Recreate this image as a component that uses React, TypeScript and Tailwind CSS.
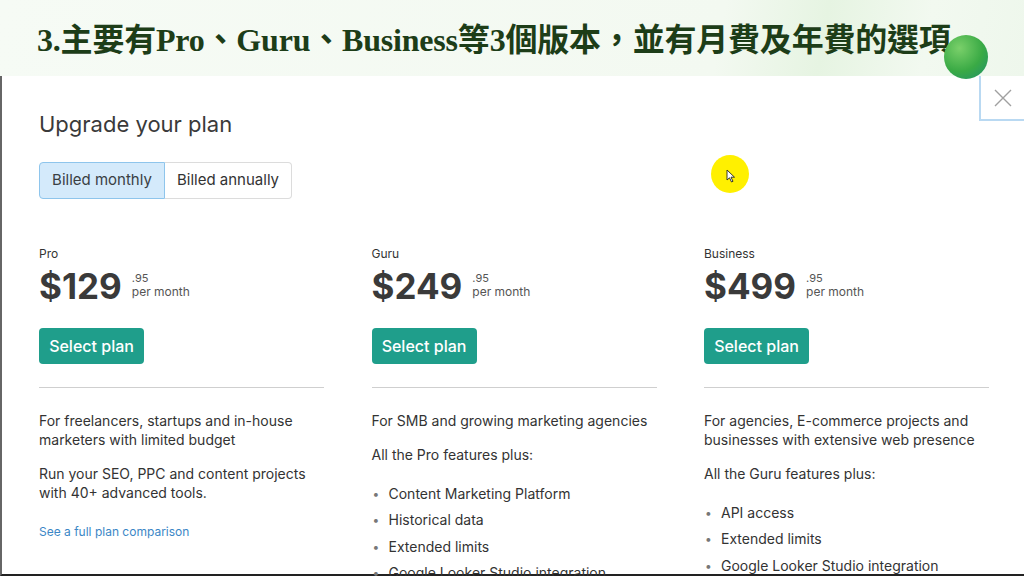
import React from "react";

function Bullet({ children }: { children: React.ReactNode }) {
  return (
    <li className="flex items-center h-[26.5px]">
      <span className="w-[17px] pl-[1px] text-[#777] text-[12px]">•</span>
      <span>{children}</span>
    </li>
  );
}

function PriceHead({ name, price }: { name: string; price: string }) {
  return (
    <>
      <div className="text-[12px] leading-[16px] text-[#333]">{name}</div>
      <div className="flex items-start mt-[5px]">
        <span className="text-[35px] leading-[38px] font-bold text-[#3a3a3a]">{price}</span>
        <div className="ml-[10px] mt-[5px] flex flex-col text-[#555]">
          <span className="text-[11px] leading-[12px]">.95</span>
          <span className="text-[12px] leading-[15px]">per month</span>
        </div>
      </div>
      <button className="mt-[23px] h-[36px] w-[105px] rounded-[4px] bg-[#1f9e8b] text-white text-[16px] font-medium">
        Select plan
      </button>
      <div className="mt-[23px] h-px bg-[#cfcfcf]" />
    </>
  );
}

export default function App() {
  return (
    <div className="relative w-[1024px] h-[576px] overflow-hidden bg-white font-['Inter','Noto_Sans',sans-serif]">
      <header className="h-[76px] flex items-center pl-[37px] bg-[linear-gradient(100deg,#f6fbf5_0%,#f3f9f1_70%,#e6f4e2_80%,#f2f9f0_90%,#eef7ec_100%)]">
        <h1 className="text-[32px] font-bold text-[#1d3d18] tracking-[-0.2px] font-['Liberation_Serif','Noto_Sans_CJK_TC',serif] mt-[4px]">
          3.主要有Pro、Guru、Business等3個版本，並有月費及年費的選項
        </h1>
      </header>

      <main className="relative h-[500px] border-l-2 border-b-2 border-l-[#666] border-b-[#222] pl-[37px] pt-[34px] text-[#333]">
        <h2 className="text-[22px] leading-[28px] text-[#3a3a3a]">Upgrade your plan</h2>

        <div className="mt-[24px] flex h-[37px] w-[253px] text-[15px]">
          <div className="flex items-center justify-center w-[126px] rounded-l-[4px] border border-[#8ec5ec] bg-[#d4eafb] text-[#3a3f44]">
            Billed monthly
          </div>
          <div className="flex items-center justify-center flex-1 rounded-r-[4px] border border-l-0 border-[#dcdcdc] bg-white text-[#333]">
            Billed annually
          </div>
        </div>

        <div className="mt-[47px] grid grid-cols-[285px_285px_285px] gap-x-[47.5px] text-[14px] leading-[19px]">
          <section>
            <PriceHead name="Pro" price="$129" />
            <p className="mt-[23px]">For freelancers, startups and in-house marketers with limited budget</p>
            <p className="mt-[15px]">Run your SEO, PPC and content projects with 40+ advanced tools.</p>
            <a className="block mt-[20px] text-[12px] text-[#3b87c6]">See a full plan comparison</a>
          </section>
          <section>
            <PriceHead name="Guru" price="$249" />
            <p className="mt-[23px]">For SMB and growing marketing agencies</p>
            <p className="mt-[15px]">All the Pro features plus:</p>
            <ul className="mt-[16px]">
              <Bullet>Content Marketing Platform</Bullet>
              <Bullet>Historical data</Bullet>
              <Bullet>Extended limits</Bullet>
              <Bullet>Google Looker Studio integration</Bullet>
            </ul>
          </section>
          <section>
            <PriceHead name="Business" price="$499" />
            <p className="mt-[23px]">For agencies, E-commerce projects and businesses with extensive web presence</p>
            <p className="mt-[15px]">All the Guru features plus:</p>
            <ul className="mt-[16px]">
              <Bullet>API access</Bullet>
              <Bullet>Extended limits</Bullet>
              <Bullet>Google Looker Studio integration</Bullet>
            </ul>
          </section>
        </div>

        <button className="absolute right-0 top-0 w-[45px] h-[45px] flex items-center justify-center border-l-2 border-b-2 border-[#b9d9f2] bg-white">
          <svg width="20" height="20" viewBox="0 0 20 20" stroke="#a0a0a0" strokeWidth="1.4" fill="none">
            <path d="M2 2 L18 18 M18 2 L2 18" />
          </svg>
        </button>
      </main>

      <div className="absolute left-[944px] top-[35px] w-[44px] h-[44px] rounded-full bg-[radial-gradient(circle_at_35%_30%,#7ad06a,#3aaa45_55%,#1e8f6c)]" />

      <div className="absolute left-[711px] top-[155px] w-[38px] h-[38px] rounded-full bg-[#fff000] flex items-center justify-center">
        <svg width="10" height="14" viewBox="0 0 10 14" className="ml-[2px] mt-[3px]">
          <path d="M1 1 L1 11 L3.5 8.8 L5.5 13 L7 12.3 L5 8.2 L8.5 8.2 Z" fill="#fff" stroke="#222" strokeWidth="0.9" />
        </svg>
      </div>
    </div>
  );
}
